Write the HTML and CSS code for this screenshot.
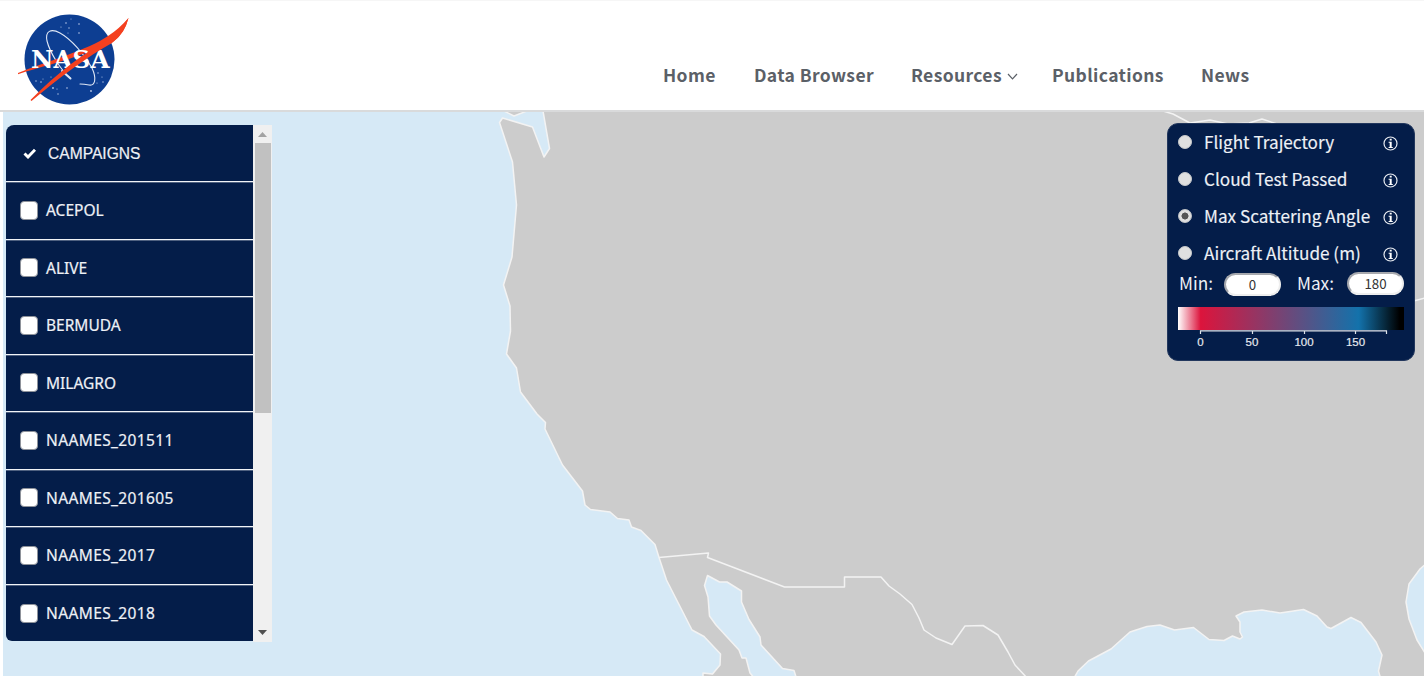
FILE: index.html
```html
<!DOCTYPE html>
<html lang="en">
<head>
<meta charset="utf-8">
<title>Data Browser</title>
<link rel="stylesheet" href="styles.css">
</head>
<body>
<header class="header">
  <svg class="logo" width="100" height="92" viewBox="16 13 100 92" role="img" aria-label="NASA">
    <circle cx="69.5" cy="59.5" r="45" fill="#0d3e92"/>
    <g fill="none" stroke="#dfe7f5" stroke-linecap="round">
      <path d="M70 78C61 70 50 53 47 41C45 31 51 28 60 33C71 39 85 55 92 68C97 79 95 86 89 85Q84 84 80 84" stroke-width="1.1"/>
      <path d="M62 71L70.500 78.500" stroke-width="2"/>
    </g>
    <g fill="#b9c9e8">
      <circle cx="66" cy="23" r=".8"/><circle cx="71" cy="19" r=".5"/><circle cx="79" cy="24" r=".8"/><circle cx="61" cy="27" r=".6"/><circle cx="69" cy="28" r=".7"/><circle cx="79" cy="33" r=".8"/><circle cx="68" cy="33" r=".5"/>
      <circle cx="36" cy="81" r=".7"/><circle cx="41" cy="82" r=".8"/><circle cx="51" cy="77" r=".6"/><circle cx="53" cy="82" r=".7"/><circle cx="53" cy="88" r=".9"/><circle cx="57" cy="89" r=".6"/><circle cx="67" cy="88" r=".8"/><circle cx="58" cy="94" r=".7"/><circle cx="43" cy="79" r=".5"/><circle cx="49" cy="84" r=".5"/>
      <circle cx="98" cy="73" r=".7"/><circle cx="102" cy="77" r=".6"/><circle cx="91" cy="91" r=".9"/><circle cx="97" cy="83" r=".6"/><circle cx="103" cy="82" r=".7"/>
    </g>
    <path d="M18 73C45 62 88 50 108 36Q119 29 128.500 18Q125 33 114 41C105 47 90 51 77 56C62 62 40 67 18 74.200Z" fill="#f4401f"/>
    <text class="logo-text" x="31" y="68.300" textLength="78.500" lengthAdjust="spacingAndGlyphs">NASA</text>
    <path d="M30.500 100C56 74 84 52 112 38L128.500 18Q124 34 112 43C87 57 60 77 31.500 101Z" fill="#f4401f"/>
  </svg>
  <nav class="nav">
    <a class="nav-link home">Home</a>
    <a class="nav-link browser">Data Browser</a>
    <a class="nav-link resources">Resources <svg width="11" height="7" viewBox="0 0 11 7"><path d="M1 1L5.500 5.800L10 1" fill="none" stroke="#5b6067" stroke-width="1.200"/></svg></a>
    <a class="nav-link publications">Publications</a>
    <a class="nav-link news">News</a>
  </nav>
</header>
<main class="map">
  <svg class="map-art" width="1421" height="564" viewBox="3 112 1421 564">
    <g fill="#ccc" stroke="#f3f3f3" stroke-width="1.500" stroke-linejoin="round">
      <path d="M504 111L514 116L527 111Z"/>
      <path d="M543 111L549.500 148.500L544 157L532.500 127L502.500 118L499.500 122.500L512.500 162L516.500 205L512 257L503.500 285L510 306L510.500 331L506.500 354L516.500 368L520.500 392L537 414L545.500 422.500L545 429L562.500 465L582.500 491L585 505L590.500 509.500L610 512L617.500 518.500L629 520L631.500 527L641 530.500L655 544.500L659 557.500L666.500 580L692 630L704 636.500L720.500 654L720 665L712.500 674L703 673V680H756L750 673L746 658H742L739 650L716 625L709.500 616L708 597L704.500 585.500L707.500 575.500L719.500 582H727L741.500 591V602L749 619.500L760 637L761 645L782.500 668.500L794 670.500L797 680H1073L1078 671L1088.500 661L1111 649L1130 632L1147 626.500L1160 625L1174.500 630L1193.500 627.500L1209 639.500L1224 640.500L1232.500 636L1240 639L1242.500 637L1240 632V622L1236 616L1244 612L1262 610L1280 613L1303.500 609.500L1317 616L1327 627L1331 628.500L1351 617.500L1361 622.500L1376 642L1382 655L1378.500 671L1381 680H1430V661L1417 640L1409 619L1406 602L1409 584L1420 569L1430 560V105H543Z"/>
      <path d="M659 557.500L708.500 553L707.500 557.500L784.500 587H844.500V577H881L889 586L900 594L912 604.500L919 618L924 630L936 638L952 644.500L965 626L983 625.500L998 635L1008 652L1015 665L1028 679" fill="none"/>
      <path d="M1163 111L1173 114L1190 123L1210 120L1228 124L1249 123L1262 119L1277 124M1410 302L1425 298" fill="none"/>
    </g>
  </svg>

  <aside class="campaigns">
    <ul class="list">
      <li class="row heading"><svg width="14" height="11" viewBox="0 0 14 11"><path d="M1.500 5.500L5 9L12 1.800" fill="none" stroke="#fff" stroke-width="2.900"/></svg><span>CAMPAIGNS</span></li>
      <li class="row"><i class="box"></i>ACEPOL</li>
      <li class="row"><i class="box"></i>ALIVE</li>
      <li class="row"><i class="box"></i>BERMUDA</li>
      <li class="row"><i class="box"></i>MILAGRO</li>
      <li class="row wide"><i class="box"></i>NAAMES_201511</li>
      <li class="row wide"><i class="box"></i>NAAMES_201605</li>
      <li class="row wide"><i class="box"></i>NAAMES_2017</li>
      <li class="row wide"><i class="box"></i>NAAMES_2018</li>
    </ul>
    <div class="scrollbar">
      <svg width="9" height="5" viewBox="0 0 9 5"><path d="M0 5L4.500 0L9 5Z" fill="#a3a3a3"/></svg>
      <div class="thumb"></div>
      <svg class="down" width="9" height="5" viewBox="0 0 9 5"><path d="M0 0L4.500 5L9 0Z" fill="#505050"/></svg>
    </div>
  </aside>

  <section class="legend">
    <div class="option"><i class="radio"></i><span class="opt-label">Flight Trajectory</span><svg class="info" width="15" height="15" viewBox="0 0 15 15"><use href="#info"/></svg></div>
    <div class="option"><i class="radio"></i><span class="opt-label">Cloud Test Passed</span><svg class="info" width="15" height="15" viewBox="0 0 15 15"><use href="#info"/></svg></div>
    <div class="option"><i class="radio checked"></i><span class="opt-label">Max Scattering Angle</span><svg class="info" width="15" height="15" viewBox="0 0 15 15"><use href="#info"/></svg></div>
    <div class="option"><i class="radio"></i><span class="opt-label">Aircraft Altitude (m)</span><svg class="info" width="15" height="15" viewBox="0 0 15 15"><use href="#info"/></svg></div>
    <div class="range">
      <span class="range-label">Min:</span><span class="field min">0</span>
      <span class="range-label">Max:</span><span class="field max">180</span>
    </div>
    <div class="ramp"></div>
    <svg class="axis" width="226" height="28" viewBox="0 0 226 28">
      <path d="M22.500 4V.8H208.500V4M74.500 .8V4M126.500 .8V4M177.500 .8V4" fill="none" stroke="#dfe3ea" stroke-width="1.200"/>
      <text x="22.500" y="15.500">0</text><text x="74" y="15.500">50</text><text x="126" y="15.500">100</text><text x="177.500" y="15.500">150</text>
    </svg>
  </section>
  <svg width="0" height="0" class="defs"><defs><g id="info"><circle cx="7.500" cy="7.500" r="6.500" fill="none" stroke="#e8ebf1" stroke-width="1.200"/><path d="M6.700 2.800H8.700V4.600H6.700ZM5.600 5.700H8.700V11H9.800V12H5.600V11H6.700V6.700H5.600Z" fill="#fff"/></g></defs></svg>
</main>
</body>
</html>
```
FILE: styles.css
```css
* { box-sizing: border-box; }
body {
  margin: 0;
  width: 1424px;
  height: 676px;
  overflow: hidden;
  background: #fff;
  font-family: "Noto Sans CJK SC", "Noto Sans", sans-serif;
}
.header {
  display: flex;
  height: 112px;
  padding: 13px 0 0 16px;
  border-bottom: 2px solid #d9dadb;
  border-top: 1px solid #f6f6f6;
}
.logo { flex: none; overflow: visible; margin-top: -1px; }
.logo-text {
  font: bold 24px "DejaVu Serif", serif;
  fill: #fff;
}
.nav {
  display: flex;
  margin: 47px 0 0 547px;
  height: 28px;
}
.nav-link {
  font-size: 17.5px;
  font-weight: 700;
  line-height: 28px;
  letter-spacing: .37px;
  color: #5b6067;
  white-space: nowrap;
}
.nav-link svg { vertical-align: 2px; margin-left: 1px; }
.home { width: 91px; }
.browser { width: 157px; }
.resources { width: 141px; }
.publications { width: 149px; }
.map {
  position: relative;
  width: 1421px;
  height: 564px;
  margin-left: 3px;
  background: #d6e9f6;
  overflow: hidden;
}
.map-art { display: block; }
.defs { display: block; }
.campaigns {
  position: absolute;
  left: 3px;
  top: 13px;
  display: flex;
  width: 266px;
  height: 517px;
}
.list {
  display: grid;
  grid-template-rows: 57px repeat(8, 57.5px);
  width: 247px;
  height: 516px;
  margin: 0;
  padding: 0;
  list-style: none;
  background: #041d49;
  border-radius: 8px 0 0 6px;
  overflow: hidden;
}
.row {
  display: flex;
  align-items: center;
  padding: 0 0 0 14px;
  border-bottom: 1px solid #f1f4f8;
  box-shadow: 0 1px rgba(255, 255, 255, .3);
  color: #eef1f6;
  font: 15.5px "Noto Sans", sans-serif;
  -webkit-text-stroke: .2px #eef1f6;
}
.wide { letter-spacing: .38px; }
.row:last-child { border: 0; box-shadow: none; }
.heading { padding: 1px 0 0 17px; font: 15.6px "Liberation Sans", sans-serif; }
.heading svg { margin-right: 11px; }
.box {
  width: 18px;
  height: 19px;
  margin-right: 8px;
  background: #fff;
  border: 1px solid #8e929a;
  border-radius: 4px;
}
.scrollbar {
  display: flex;
  flex-direction: column;
  align-items: center;
  width: 19px;
  height: 517px;
  padding: 7px 0;
  background: #f0f0f0;
}
.thumb { width: 16px; height: 270px; margin-top: 6px; background: #c1c1c1; }
.down { margin-top: auto; }
.legend {
  position: absolute;
  left: 1164px;
  top: 11px;
  width: 248px;
  height: 238px;
  padding: 1px 10px 0;
  border: 1px solid #22375d;
  border-radius: 11px;
  background: #041d49;
}
.option {
  display: flex;
  align-items: center;
  height: 36.8px;
  color: #eef1f6;
}
.radio {
  width: 14px;
  height: 14px;
  margin-top: -2px;
  border-radius: 50%;
  background: #e0e0e0;
  border: 1px solid #c5c7ca;
}
.checked { background: radial-gradient(circle, #555 0 3.2px, #e0e0e0 3.8px); }
.opt-label {
  margin: -2px 0 0 12px;
  font-size: 17.15px;
  line-height: 26px;
  white-space: nowrap;
  -webkit-text-stroke: .15px #eef1f6;
}
.info { margin: 1px 6px 0 auto; }
.range { display: flex; align-items: center; height: 24px; color: #eef1f6; }
.range-label { margin: -3px 0 0 1px; font-size: 17.2px; line-height: 24px; }
.field {
  height: 23px;
  width: 57px;
  border: 2px solid #a6a8ad;
  border-right-color: #eee;
  border-bottom-color: #eee;
  border-radius: 12px;
  background: #fff;
  color: #333;
  font-size: 13.3px;
  line-height: 19px;
  text-align: center;
}
.min { margin: 1px 15px 0 11px; }
.max { margin: -1px 0 0 auto; }
.ramp {
  height: 23px;
  margin-top: 11px;
  background: linear-gradient(90deg, #fff 0, #dc143c 10%, #1372ab 80%, #000 98%);
}
.axis { display: block; }
.axis text {
  font: 11.5px "Liberation Sans", sans-serif;
  fill: #e5e8ee;
  stroke: #e5e8ee;
  stroke-width: .2px;
  text-anchor: middle;
}
```
